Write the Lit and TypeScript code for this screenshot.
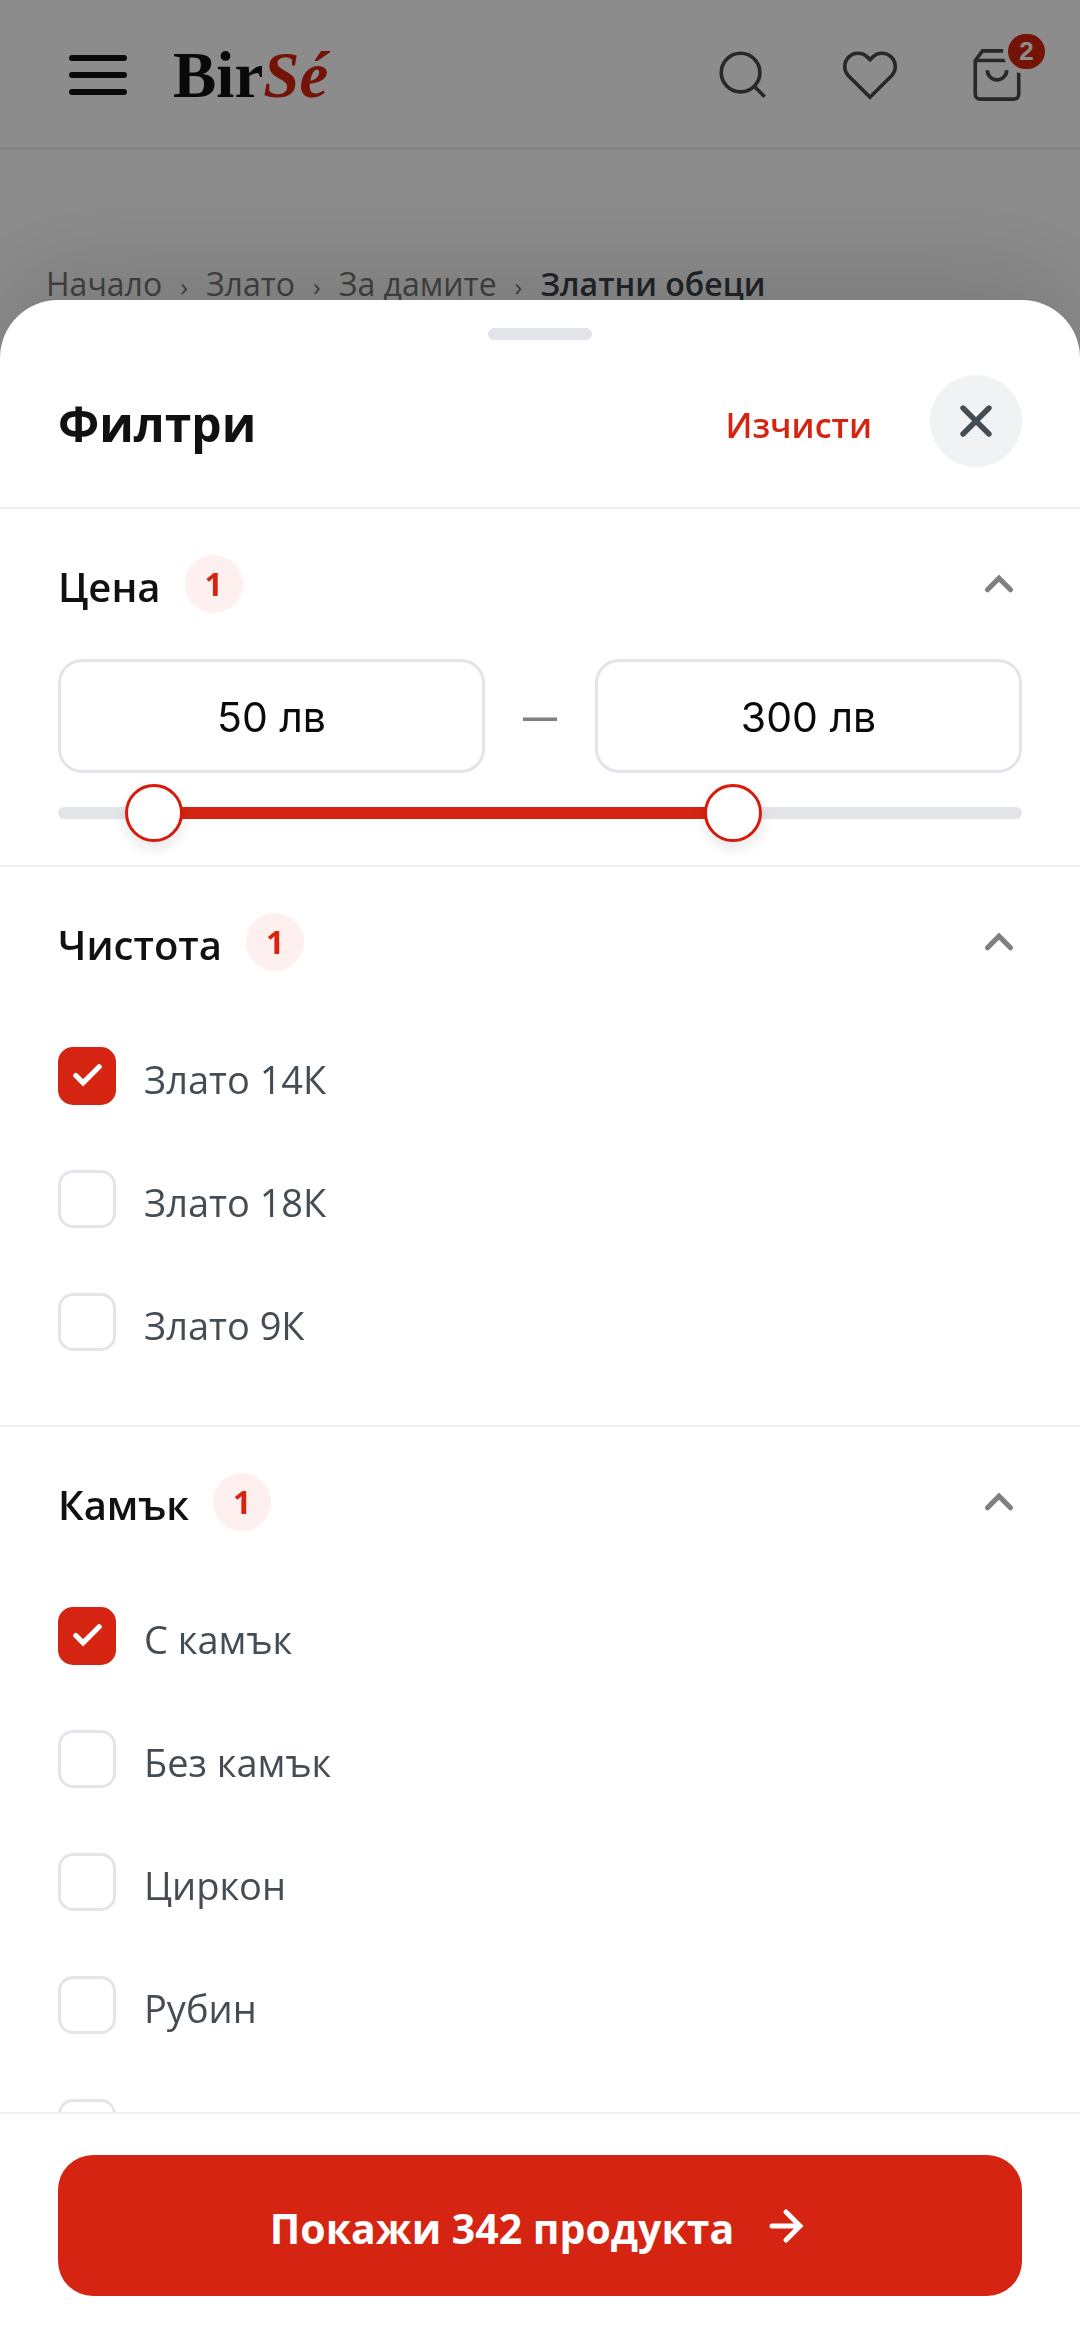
import { LitElement, html, css, svg } from "lit";
import { customElement, property, state } from "lit/decorators.js";
import { ifDefined } from "lit/directives/if-defined.js";
import { styleMap } from "lit/directives/style-map.js";

const base = css`
  *,
  *::before,
  *::after {
    box-sizing: border-box;
  }
  button,
  input {
    margin: 0;
    border: 0;
    padding: 0;
    background: none;
    font: inherit;
    color: inherit;
  }
  button {
    cursor: pointer;
  }
  svg {
    display: block;
    flex: none;
    fill: none;
    stroke: currentColor;
  }
`;

const icons = {
  search: svg`<circle cx="11" cy="11" r="8" /><path d="M21 21l-4.35-4.35" />`,
  heart: svg`<path d="M20.84 4.61a5.5 5.5 0 0 0-7.78 0L12 5.67l-1.06-1.06a5.5 5.5 0 0 0-7.78 7.78l1.06 1.06L12 21.23l7.78-7.78 1.06-1.06a5.5 5.5 0 0 0 0-7.78z" />`,
  bag: svg`<path d="M6 2L3 6v14a2 2 0 0 0 2 2h14a2 2 0 0 0 2-2V6l-3-4z" /><path d="M3 6h18" /><path d="M16 10a4 4 0 0 1-8 0" />`,
};

@customElement("shop-header")
class ShopHeader extends LitElement {
  @property({ type: Number }) cartCount = 0;

  static styles = [
    base,
    css`
      :host {
        display: block;
      }
      .bar {
        display: flex;
        align-items: center;
        height: 150px;
        padding: 3px 20px 0 34px;
        border-bottom: 3px solid #f0f0f0;
      }
      .tap {
        display: grid;
        place-items: center;
        width: 127px;
        height: 127px;
        color: #4a4a4a;
      }
      .icon {
        width: 58px;
        height: 58px;
        stroke-width: 1.5;
      }
      .burger {
        display: grid;
        gap: 11px;
        width: 58px;
      }
      .line {
        height: 6px;
        border-radius: 3px;
        background: #111;
      }
      .logo {
        flex: 1;
        padding-left: 12px;
        font: 700 65px/1 "Liberation Serif", serif;
        color: #111;
        text-decoration: none;
      }
      .accent {
        font-style: italic;
        color: #d62412;
      }
      .cart {
        position: relative;
      }
      .badge {
        position: absolute;
        top: 22px;
        right: 15px;
        min-width: 37px;
        height: 35px;
        border-radius: 18px;
        background: #d62412;
        box-shadow: 0 0 0 5px #fff;
        font: 700 26px/35px "Liberation Sans", sans-serif;
        color: #fff;
        text-align: center;
      }
    `,
  ];

  render() {
    return html`
      <header class="bar">
        <button class="tap" aria-label="Меню">
          <span class="burger">
            <span class="line"></span><span class="line"></span><span class="line"></span>
          </span>
        </button>
        <a class="logo" href="#">Bir<span class="accent">Sé</span></a>
        <button class="tap" aria-label="Търсене">
          <svg class="icon" viewBox="0 0 24 24">${icons.search}</svg>
        </button>
        <button class="tap" aria-label="Любими">
          <svg class="icon" viewBox="0 0 24 24">${icons.heart}</svg>
        </button>
        <button class="tap cart" aria-label="Количка">
          <svg class="icon" viewBox="0 0 24 24">${icons.bag}</svg>
          <span class="badge">${this.cartCount}</span>
        </button>
      </header>
    `;
  }
}

@customElement("filter-section")
class FilterSection extends LitElement {
  @property() heading = "";
  @property({ type: Number }) count = 0;
  @state() private open = true;

  static styles = [
    base,
    css`
      :host {
        display: block;
        padding: 46px 58px 0;
        border-bottom: 2px solid #f0f0f1;
      }
      .title {
        margin: 0;
        font: inherit;
      }
      .toggle {
        display: flex;
        align-items: center;
        gap: 24px;
        width: 100%;
        height: 58px;
        font-size: 40px;
        font-weight: 600;
        color: #111;
      }
      .name {
        padding-top: 4px;
      }
      .count {
        width: 58px;
        height: 58px;
        border-radius: 50%;
        background: #fdf0ef;
        font-size: 32px;
        font-weight: 700;
        line-height: 58px;
        color: #d62412;
      }
      .chevron {
        width: 46px;
        height: 46px;
        margin-left: auto;
        stroke-width: 2.7;
        stroke-linecap: round;
        color: #808080;
      }
      .closed {
        rotate: 180deg;
      }
    `,
  ];

  render() {
    return html`
      <h3 class="title">
        <button
          class="toggle"
          aria-expanded=${this.open ? "true" : "false"}
          @click=${() => (this.open = !this.open)}
        >
          <span class="name">${this.heading}</span>
          <span class="count">${this.count}</span>
          <svg class="chevron ${this.open ? "" : "closed"}" viewBox="0 0 24 24">
            <path d="M18 15l-6-6-6 6" />
          </svg>
        </button>
      </h3>
      ${this.open ? html`<slot></slot>` : ""}
    `;
  }
}

@customElement("price-range")
class PriceRange extends LitElement {
  @state() private low = 10;
  @state() private high = 70;

  static styles = [
    base,
    css`
      :host {
        display: block;
        padding: 46px 0 23px;
      }
      .fields {
        display: grid;
        grid-template-columns: 1fr 110px 1fr;
        align-items: center;
      }
      .field {
        width: 100%;
        height: 114px;
        border: 3px solid #e4e5ea;
        border-radius: 24px;
        padding-top: 2px;
        font: 400 41px/48px Inter, sans-serif;
        color: #0a0a0a;
        text-align: center;
      }
      .dash {
        padding-bottom: 4px;
        font-size: 37px;
        font-weight: 600;
        color: #808080;
        text-align: center;
      }
      .slider {
        position: relative;
        display: grid;
        align-items: center;
        height: 58px;
        margin-top: 11px;
      }
      .track {
        height: 12px;
        border-radius: 6px;
        background: #e4e5ea;
      }
      .fill {
        height: 12px;
        background: #d62412;
      }
      .thumb {
        position: absolute;
        inset: 0 -29px;
        width: calc(100% + 58px);
        height: 58px;
        appearance: none;
        pointer-events: none;
      }
      .thumb::-webkit-slider-thumb {
        appearance: none;
        width: 58px;
        height: 58px;
        border: 3px solid #d61a0c;
        border-radius: 50%;
        background: #fff;
        box-shadow: 0 6px 14px rgba(0, 0, 0, 0.1);
        pointer-events: auto;
      }
    `,
  ];

  render() {
    const fill = {
      marginLeft: `${this.low}%`,
      width: `${this.high - this.low}%`,
    };
    return html`
      <div class="fields">
        <input class="field" aria-label="Цена от" value="50 лв" />
        <span class="dash">—</span>
        <input class="field" aria-label="Цена до" value="300 лв" />
      </div>
      <div class="slider">
        <div class="track"><div class="fill" style=${styleMap(fill)}></div></div>
        <input
          class="thumb"
          type="range"
          aria-label="Минимална цена"
          .value=${String(this.low)}
          @input=${(e: Event) => (this.low = Number((e.target as HTMLInputElement).value))}
        />
        <input
          class="thumb"
          type="range"
          aria-label="Максимална цена"
          .value=${String(this.high)}
          @input=${(e: Event) => (this.high = Number((e.target as HTMLInputElement).value))}
        />
      </div>
    `;
  }
}

interface Option {
  label?: string;
  hint?: string;
  checked?: boolean;
}

@customElement("option-list")
class OptionList extends LitElement {
  @property({ attribute: false }) options: Option[] = [];

  static styles = [
    base,
    css`
      :host {
        display: block;
        padding: 43px 0 42px;
      }
      .row {
        display: flex;
        align-items: center;
        gap: 28px;
        height: 123px;
        font-size: 38px;
        color: #444c54;
        cursor: pointer;
      }
      .box {
        display: grid;
        flex: none;
        width: 58px;
        height: 58px;
      }
      .input,
      .check {
        grid-area: 1 / 1;
      }
      .input {
        appearance: none;
        width: 58px;
        height: 58px;
        border: 3px solid #e4e5ea;
        border-radius: 15px;
        background: #fff;
      }
      .input:checked {
        border-color: #d62412;
        background: #d62412;
      }
      .check {
        place-self: center;
        width: 35px;
        height: 35px;
        stroke-width: 3.6;
        stroke-linecap: round;
        color: #fff;
        pointer-events: none;
      }
      .text {
        padding-top: 6px;
      }
    `,
  ];

  render() {
    return this.options.map(
      (o) => html`
        <label class="row">
          <span class="box">
            <input
              class="input"
              type="checkbox"
              aria-label=${ifDefined(o.hint)}
              .checked=${!!o.checked}
            />
            <svg class="check" viewBox="0 0 24 24"><path d="M20 6L9 17l-5-5" /></svg>
          </span>
          ${o.label ? html`<span class="text">${o.label}</span>` : ""}
        </label>
      `
    );
  }
}

const purity: Option[] = [
  { label: "Злато 14К", checked: true },
  { label: "Злато 18К" },
  { label: "Злато 9К" },
];

const stones: Option[] = [
  { label: "С камък", checked: true },
  { label: "Без камък" },
  { label: "Циркон" },
  { label: "Рубин" },
  { hint: "Друг камък" },
];

const trail = ["Начало", "Злато", "За дамите"];

@customElement("app-root")
class AppRoot extends LitElement {
  static styles = [
    base,
    css`
      :host {
        display: block;
        min-height: 100vh;
        background: #fff;
        font-family: "Open Sans", sans-serif;
      }
      .crumbs {
        display: flex;
        align-items: baseline;
        gap: 18px;
        padding: 112px 46px 0;
        font-size: 32px;
        line-height: 44px;
        white-space: nowrap;
        color: #777;
      }
      .link {
        color: inherit;
        text-decoration: none;
      }
      .sep {
        padding-bottom: 4px;
        font-size: 26px;
      }
      .current {
        font-weight: 600;
        color: #3b4249;
      }
      .scrim {
        position: fixed;
        inset: 0;
        display: flex;
        flex-direction: column;
        padding-top: 300px;
        background: rgba(0, 0, 0, 0.45);
      }
      .sheet {
        display: flex;
        flex: 1;
        flex-direction: column;
        min-height: 0;
        border-radius: 58px 58px 0 0;
        background: #fff;
        box-shadow: 0 -23px 115px rgba(0, 0, 0, 0.15);
      }
      .grip {
        align-self: center;
        width: 104px;
        height: 12px;
        margin-top: 28px;
        border-radius: 6px;
        background: #e4e5ea;
      }
      .head {
        display: flex;
        align-items: center;
        gap: 58px;
        padding: 35px 58px 40px;
        border-bottom: 2px solid #f0f0f1;
      }
      .title {
        flex: 1;
        margin: 0;
        padding-top: 6px;
        font-size: 48px;
        font-weight: 700;
        line-height: 60px;
        color: #111;
      }
      .clear {
        padding-top: 8px;
        font-size: 34px;
        font-weight: 600;
        line-height: 52px;
        color: #d62412;
      }
      .close {
        display: grid;
        place-items: center;
        width: 92px;
        height: 92px;
        border-radius: 50%;
        background: #f1f2f4;
        color: #444c54;
      }
      .cross {
        width: 52px;
        height: 52px;
        stroke-width: 2.5;
        stroke-linecap: round;
      }
      .body {
        flex: 1;
        min-height: 0;
        overflow-y: auto;
        scrollbar-width: none;
      }
      .foot {
        padding: 41px 58px 43px;
        border-top: 2px solid #f0f0f1;
      }
      .apply {
        display: flex;
        align-items: center;
        justify-content: center;
        gap: 28px;
        width: 100%;
        height: 141px;
        border-radius: 35px;
        background: #d62412;
        font-size: 41px;
        font-weight: 700;
        color: #fff;
      }
      .name {
        padding-top: 4px;
      }
      .arrow {
        width: 48px;
        height: 48px;
        stroke-width: 2.5;
        stroke-linecap: round;
      }
    `,
  ];

  render() {
    return html`
      <shop-header .cartCount=${2}></shop-header>
      <nav class="crumbs" aria-label="Навигация">
        ${trail.map((t) => html`<a class="link" href="#">${t}</a><span class="sep">›</span>`)}
        <span class="current">Златни обеци</span>
      </nav>
      <div class="scrim">
        <section class="sheet" role="dialog" aria-labelledby="sheet-title">
          <div class="grip"></div>
          <div class="head">
            <h2 class="title" id="sheet-title">Филтри</h2>
            <button class="clear">Изчисти</button>
            <button class="close" aria-label="Затвори">
              <svg class="cross" viewBox="0 0 24 24"><path d="M18 6L6 18M6 6l12 12" /></svg>
            </button>
          </div>
          <div class="body">
            <filter-section heading="Цена" .count=${1}><price-range></price-range></filter-section>
            <filter-section heading="Чистота" .count=${1}>
              <option-list .options=${purity}></option-list>
            </filter-section>
            <filter-section heading="Камък" .count=${1}>
              <option-list .options=${stones}></option-list>
            </filter-section>
          </div>
          <div class="foot">
            <button class="apply">
              <span class="name">Покажи 342 продукта</span>
              <svg class="arrow" viewBox="0 0 24 24"><path d="M5 12h14M12 5l7 7-7 7" /></svg>
            </button>
          </div>
        </section>
      </div>
    `;
  }
}
